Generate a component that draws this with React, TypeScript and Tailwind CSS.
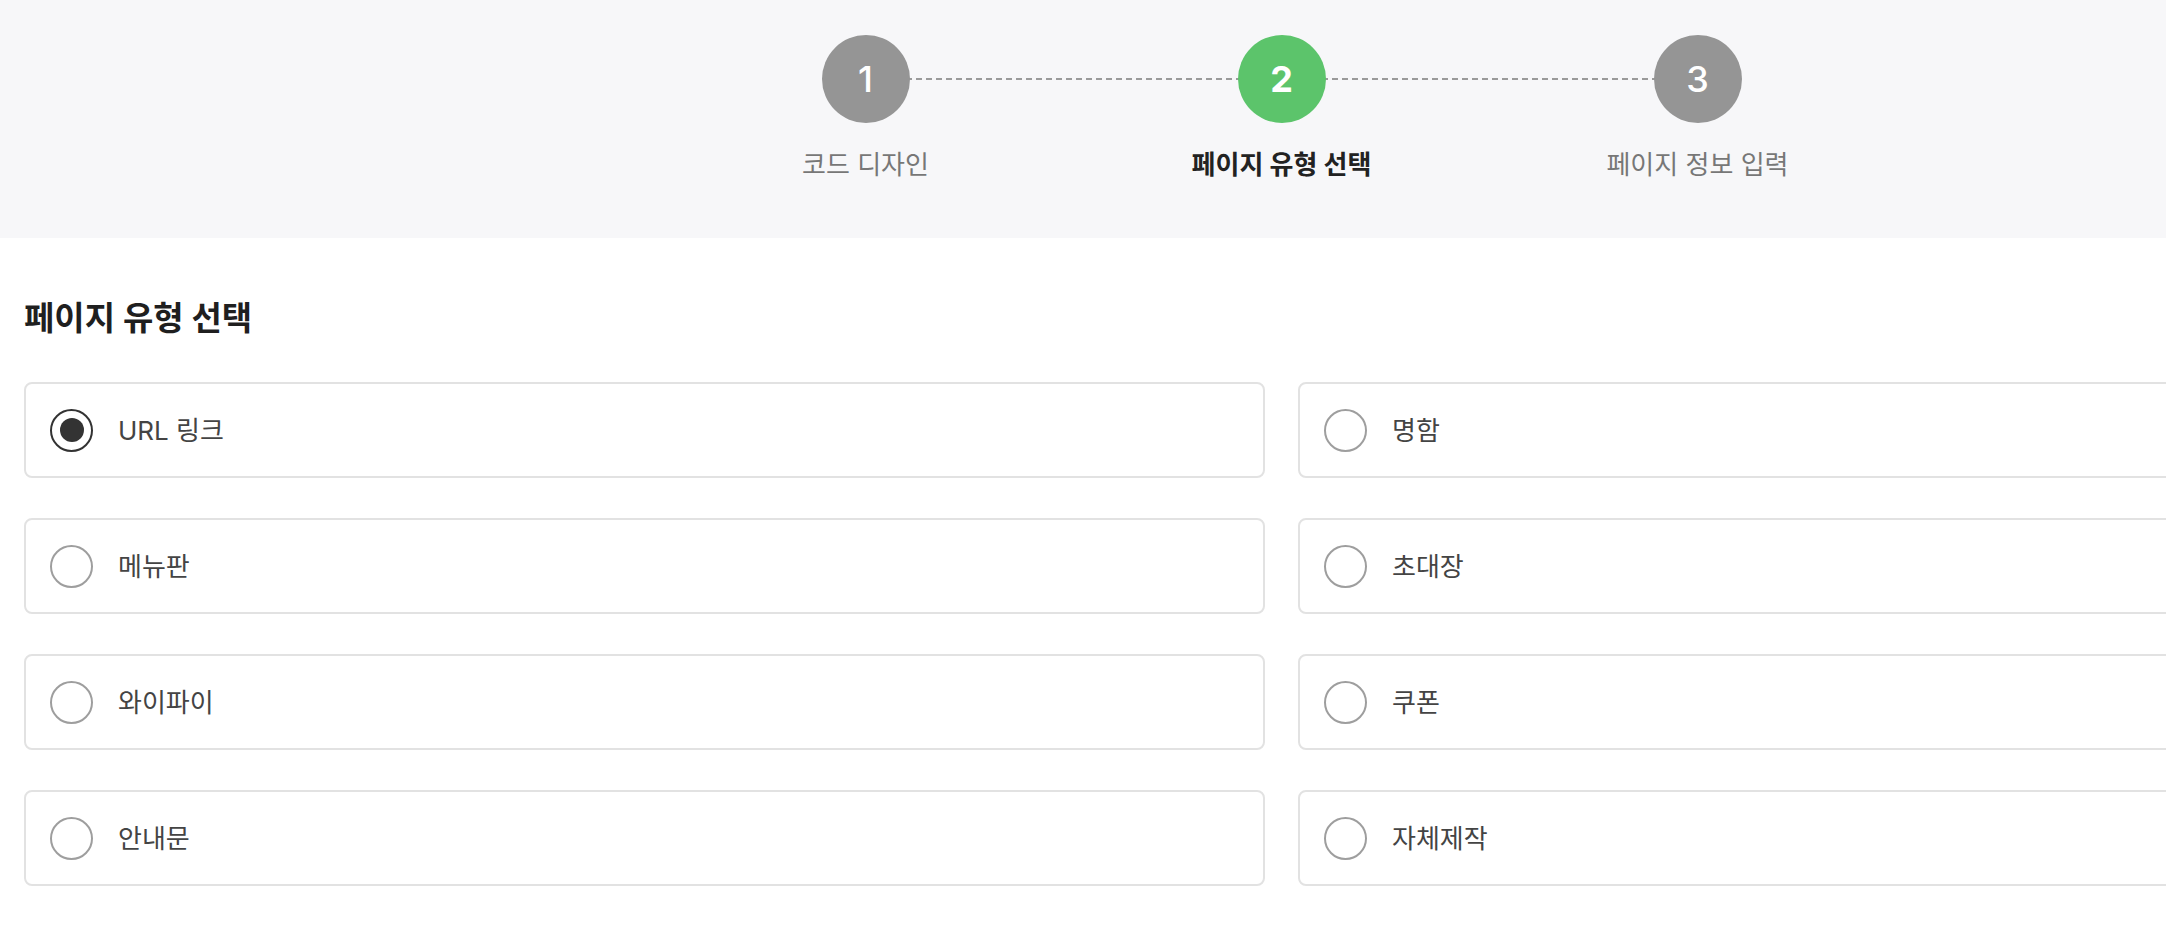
import { useState } from 'react';

const FONT = 'font-[Inter,"Noto_Sans_CJK_KR",sans-serif]';

const STEPS = [
  { no: 1, label: '코드 디자인' },
  { no: 2, label: '페이지 유형 선택' },
  { no: 3, label: '페이지 정보 입력' },
];

const PAGE_TYPES = [
  { key: 'url', label: 'URL 링크' },
  { key: 'card', label: '명함' },
  { key: 'menu', label: '메뉴판' },
  { key: 'invite', label: '초대장' },
  { key: 'wifi', label: '와이파이' },
  { key: 'coupon', label: '쿠폰' },
  { key: 'notice', label: '안내문' },
  { key: 'custom', label: '자체제작' },
];

function Stepper({ current }: { current: number }) {
  return (
    <div className="flex h-[238px] justify-center bg-[#f7f7f9] pt-[35px]">
      {STEPS.map((step, i) => {
        const active = step.no === current;
        return (
          <div key={step.no} className="relative flex w-[416px] flex-col items-center">
            {/* connector to the next step, drawn behind the circles */}
            {i < STEPS.length - 1 ? (
              <div className="absolute left-1/2 top-[43px] w-full border-t-2 border-dashed border-[#9a9a9a]" />
            ) : null}
            <div
              className={
                active
                  ? 'relative z-10 flex h-[88px] w-[88px] items-center justify-center rounded-full bg-[#5cc46b] text-[36px] font-bold text-white'
                  : 'relative z-10 flex h-[88px] w-[88px] items-center justify-center rounded-full bg-[#959595] text-[36px] font-medium text-white'
              }
            >
              {step.no}
            </div>
            <div
              className={
                active
                  ? 'mt-[23px] text-[26px] font-bold leading-[38px] text-[#222]'
                  : 'mt-[23px] text-[26px] leading-[38px] text-[#777]'
              }
            >
              {step.label}
            </div>
          </div>
        );
      })}
    </div>
  );
}

function Radio({ checked }: { checked: boolean }) {
  return checked ? (
    <span className="flex h-[43px] w-[43px] shrink-0 items-center justify-center rounded-full border-2 border-[#333]">
      <span className="h-[24px] w-[24px] rounded-full bg-[#333]" />
    </span>
  ) : (
    <span className="h-[43px] w-[43px] shrink-0 rounded-full border-2 border-[#9e9e9e]" />
  );
}

export default function App() {
  const [selected, setSelected] = useState('url');

  return (
    <div className={`min-h-[934px] overflow-hidden bg-white ${FONT}`}>
      <div className="w-[2563px]">
        <Stepper current={2} />
        <section className="px-[24px] pt-[57px]">
          <h2 className="text-[33px] font-bold leading-[46px] text-[#1f1f1f]">페이지 유형 선택</h2>
          <div className="mt-[41px] grid grid-cols-[1241px_1241px] gap-x-[33px] gap-y-[40px]">
            {PAGE_TYPES.map((type) => (
              <label
                key={type.key}
                className="flex h-[96px] cursor-pointer items-center gap-[25px] rounded-[8px] border-2 border-[#e2e2e2] bg-white pl-[24px]"
              >
                <input
                  type="radio"
                  name="page-type"
                  value={type.key}
                  checked={selected === type.key}
                  onChange={() => setSelected(type.key)}
                  className="sr-only"
                />
                <Radio checked={selected === type.key} />
                <span className="text-[26px] text-[#444]">{type.label}</span>
              </label>
            ))}
          </div>
        </section>
      </div>
    </div>
  );
}
